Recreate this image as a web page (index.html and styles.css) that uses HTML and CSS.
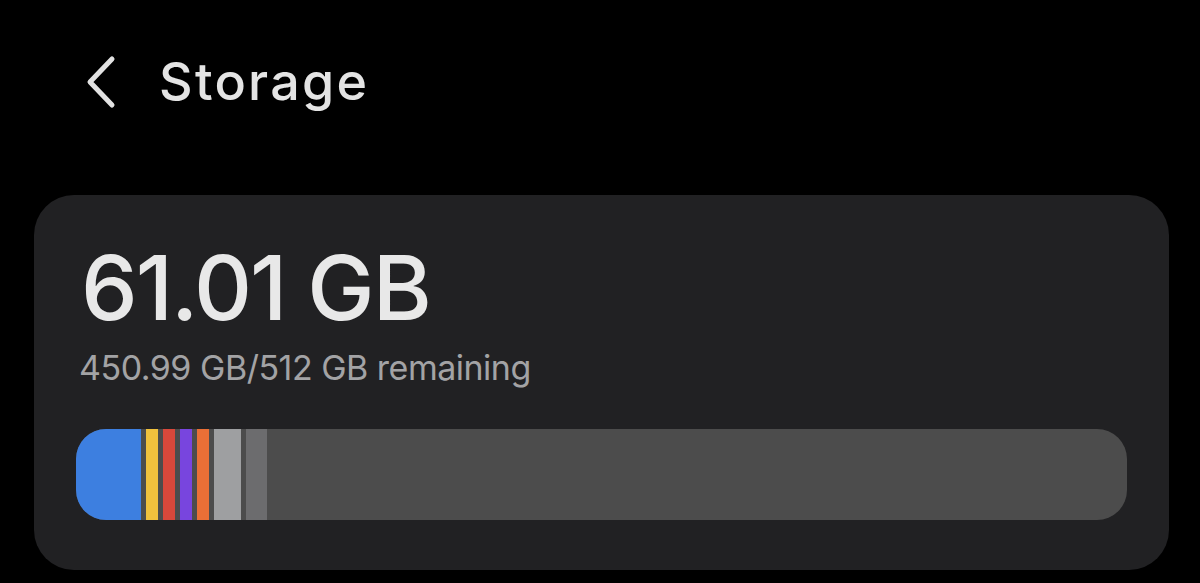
FILE: index.html
```html
<!DOCTYPE html>
<html lang="en">
<head>
  <meta charset="UTF-8" />
  <meta name="viewport" content="width=device-width, initial-scale=1.0"/>
  <title>Storage</title>
  <link rel="stylesheet" href="styles.css">
</head>
<body>
  <header class="topbar">
    <button class="back-btn" aria-label="Back">
      <svg width="30" height="54" viewBox="0 0 30 54">
        <path d="M26 4 L4 27 L26 50" fill="none" stroke="#e2e2e2" stroke-width="5" stroke-linecap="round" stroke-linejoin="round"/>
      </svg>
    </button>
    <h1>Storage</h1>
  </header>

  <section class="card">
    <div class="used">61.01 GB</div>
    <div class="remaining">450.99 GB/512 GB remaining</div>

    <div class="bar">
      <span class="seg" style="width:65px;background:#3d7fe0"></span>
      <span class="seg" style="width:12px;background:#f0c13d"></span>
      <span class="seg" style="width:12px;background:#d8483b"></span>
      <span class="seg" style="width:12px;background:#7845de"></span>
      <span class="seg" style="width:12px;background:#e96f36"></span>
      <span class="seg" style="width:27px;background:#9e9fa1"></span>
      <span class="seg" style="width:21px;background:#6c6c6e"></span>
    </div>
  </section>
</body>
</html>
```

FILE: styles.css
```css
body {
  margin: 0;
  background: #000;
  color: #e6e6e6;
  font-family: Inter, "Noto Sans", sans-serif;
  height: 583px;
  overflow: hidden;
}

.topbar {
  display: flex;
  align-items: center;
  height: 164px;
  padding-left: 86px;
  box-sizing: border-box;
  padding-bottom: 1px;
}

.back-btn {
  background: none;
  border: none;
  padding: 0;
  width: 30px;
  height: 54px;
  display: flex;
}

.topbar h1 {
  margin: 0 0 0 43px;
  font-size: 52px;
  font-weight: 500;
  color: #e4e4e4;
  letter-spacing: 2.3px;
}

.card {
  margin: 31px 31px 0 34px;
  background: #212123;
  border-radius: 40px;
  padding: 48px 42px 50px;
  height: 375px;
  box-sizing: border-box;
}

.used {
  font-size: 90px;
  font-weight: 500;
  line-height: 90px;
  color: #e8e8e8;
  margin-left: 5px;
  letter-spacing: -2px;
}

.remaining {
  font-size: 34px;
  font-weight: 400;
  color: #a3a3a5;
  margin: 15px 0 0 3px;
  line-height: 40px;
  letter-spacing: -0.5px;
}

.bar {
  display: flex;
  gap: 5px;
  height: 91px;
  margin-top: 41px;
  background: #4c4c4c;
  border-radius: 30px;
  overflow: hidden;
}

.seg {
  display: block;
  height: 100%;
}
```
